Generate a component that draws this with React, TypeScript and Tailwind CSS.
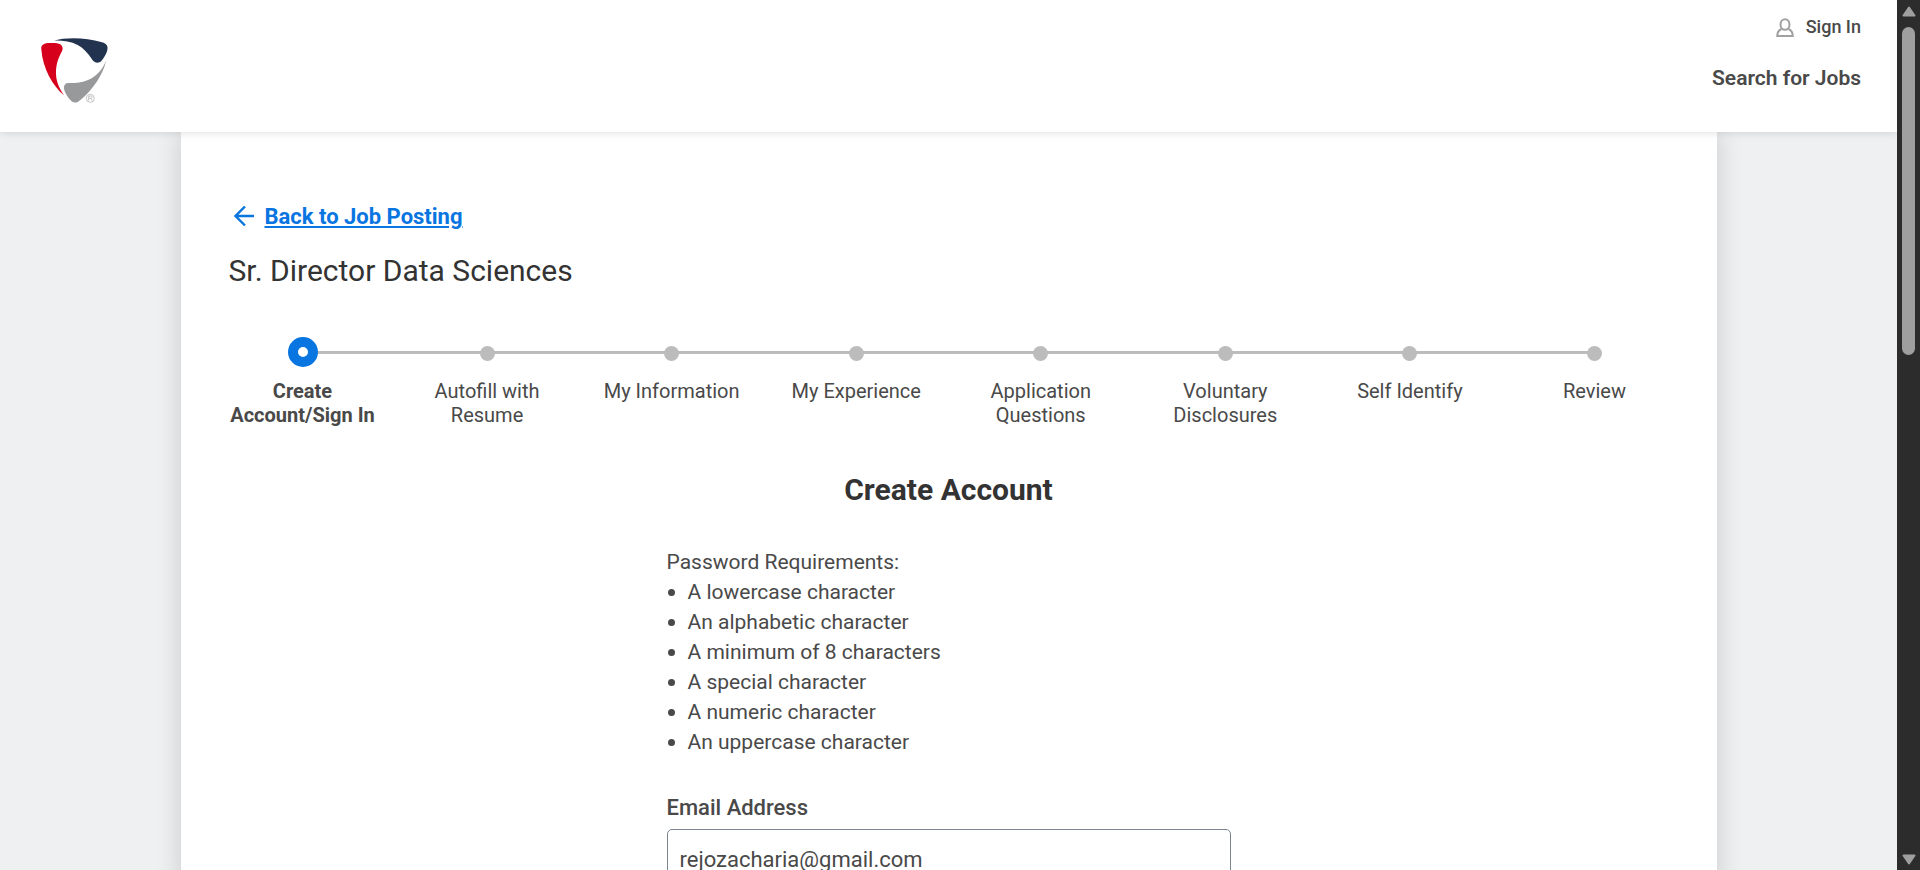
import React from "react";

const steps = [
  "Create Account/Sign In",
  "Autofill with Resume",
  "My Information",
  "My Experience",
  "Application Questions",
  "Voluntary Disclosures",
  "Self Identify",
  "Review",
];

const requirements = [
  "A lowercase character",
  "An alphabetic character",
  "A minimum of 8 characters",
  "A special character",
  "A numeric character",
  "An uppercase character",
];

function Logo() {
  return (
    <svg viewBox="60 48 168 207" className="h-[69px] w-14 overflow-visible" role="img" aria-label="Company logo">
      <path
        d="M64 88C62 74 73 69 90 69C102 68 114 69 121 73C128 78 130 86 126 94C117 110 107 132 108 162C109 188 120 208 132 226C98 198 68 146 64 88Z"
        fill="#d6001c"
      />
      <path
        d="M99 62C140 51 196 52 246 67C260 71 265 79 262 90C259 103 251 115 244 123C237 130 225 130 218 121C203 98 190 84 173 75C151 64 125 61 99 62Z"
        fill="#22334f"
      />
      <path
        d="M259 119C251 162 217 211 181 240C171 250 160 250 152 241C142 230 135 219 132 206C131 194 137 188 149 189C168 189 187 188 206 179C231 167 249 147 259 119Z"
        fill="#98999b"
      />
      <circle cx="211" cy="235" r="12" fill="none" stroke="#a5a6a8" strokeWidth="2" />
      <path d="M206 242V228H212C218 228 218 235 212 235H206M212 235L217 242" fill="none" stroke="#a5a6a8" strokeWidth="2" />
    </svg>
  );
}

function Header() {
  return (
    <header className="relative z-10 flex h-33 shrink-0 items-start justify-between bg-white pr-9 pl-10 shadow-[0_1px_8px_rgba(0,0,0,0.12)]">
      <a href="#home" className="mt-9">
        <Logo />
      </a>
      <nav className="flex flex-col items-end gap-[25px] pt-[13px] text-[#494949]">
        <button type="button" className="flex items-center gap-3 text-lg leading-7 font-medium">
          <svg viewBox="0 0 18 20" className="h-5 w-[18px]" fill="none" stroke="#a1a1a1" strokeWidth="2">
            <ellipse cx="9" cy="7.5" rx="4.5" ry="5.3" />
            <path d="M5.5 12C3 13 1.3 15 1.2 19H16.8C16.7 15 15 13 12.5 12" />
          </svg>
          Sign In
        </button>
        <a href="#jobs" className="text-[21px] leading-6 font-semibold">
          Search for Jobs
        </a>
      </nav>
    </header>
  );
}

function Progress() {
  return (
    <div className="mt-[46px] grid">
      <div className="col-start-1 row-start-1 mx-[74px] mt-3.5 h-[3px] bg-[#bcbcbc]" />
      <ol className="col-start-1 row-start-1 flex justify-between">
        {steps.map((step, i) => (
          <li key={step} className="flex w-[148px] flex-col items-center text-center text-xl leading-6 text-[#494949]">
            <div className="flex h-[30px] items-center">
              {i === 0 ? (
                <span className="size-[30px] rounded-full border-[10px] border-[#0875e1] bg-white" />
              ) : (
                <span className="mt-[3px] size-[15px] rounded-full bg-[#bcbcbc]" />
              )}
            </div>
            <span className={i === 0 ? "mt-3 font-bold" : "mt-3"}>{step}</span>
          </li>
        ))}
      </ol>
    </div>
  );
}

function Scrollbar() {
  return (
    <div aria-hidden="true" className="flex w-[23px] shrink-0 flex-col items-center justify-between bg-[#2c2c2c] pt-1.5 pb-[5px]">
      <div className="flex flex-col items-center gap-2.5">
        <svg viewBox="0 0 14 11" className="h-[11px] w-3.5">
          <path d="M7 1.5L12.5 9.5H1.5Z" fill="#9f9f9f" stroke="#9f9f9f" strokeWidth="2" strokeLinejoin="round" />
        </svg>
        <div className="h-[328px] w-[13px] rounded-full bg-[#9f9f9f]" />
      </div>
      <svg viewBox="0 0 14 11" className="h-[11px] w-3.5">
        <path d="M7 9.5L12.5 1.5H1.5Z" fill="#9f9f9f" stroke="#9f9f9f" strokeWidth="2" strokeLinejoin="round" />
      </svg>
    </div>
  );
}

export default function App() {
  return (
    <div className="flex h-screen overflow-hidden bg-[#eef0f2] font-[Roboto,sans-serif]">
      <div className="flex min-w-0 flex-1 flex-col overflow-hidden">
        <Header />
        <main className="mx-auto w-full max-w-[1536px] flex-1 bg-white px-12 pt-[70px] shadow-[0_0_25px_rgba(0,0,0,0.16)]">
          <a href="#posting" className="ml-1 flex w-fit items-center gap-2.5 text-[22px] leading-[30px] font-bold text-[#0875e1]">
            <svg viewBox="0 0 22 22" className="size-[22px]" fill="none" stroke="currentColor" strokeWidth="2.4">
              <path d="M12 .5L2.5 10L12 19.5M2.5 10H21" />
            </svg>
            <span className="underline decoration-2 underline-offset-2">Back to Job Posting</span>
          </a>
          <h1 className="mt-[19px] text-3xl leading-10 text-[#333]">Sr. Director Data Sciences</h1>
          <Progress />
          <section className="mx-auto mt-[43px] w-full max-w-[564px] text-[21px] leading-[30px] text-[#494949]">
            <h2 className="text-center text-3xl leading-10 font-bold text-[#333]">Create Account</h2>
            <p className="mt-[37px]">Password Requirements:</p>
            <ul>
              {requirements.map((item) => (
                <li key={item} className="flex items-center gap-[13px]">
                  <span className="mt-px ml-px size-[7px] rounded-full bg-[#494949]" />
                  {item}
                </li>
              ))}
            </ul>
            <form className="mt-9 flex flex-col gap-1.5 text-[22px]">
              <label htmlFor="email" className="font-medium">
                Email Address
              </label>
              <input
                id="email"
                type="email"
                defaultValue="rejozacharia@gmail.com"
                className="h-[60px] rounded-[5px] border border-[#7b858f] bg-white px-3 outline-none"
              />
            </form>
          </section>
        </main>
      </div>
      <Scrollbar />
    </div>
  );
}
